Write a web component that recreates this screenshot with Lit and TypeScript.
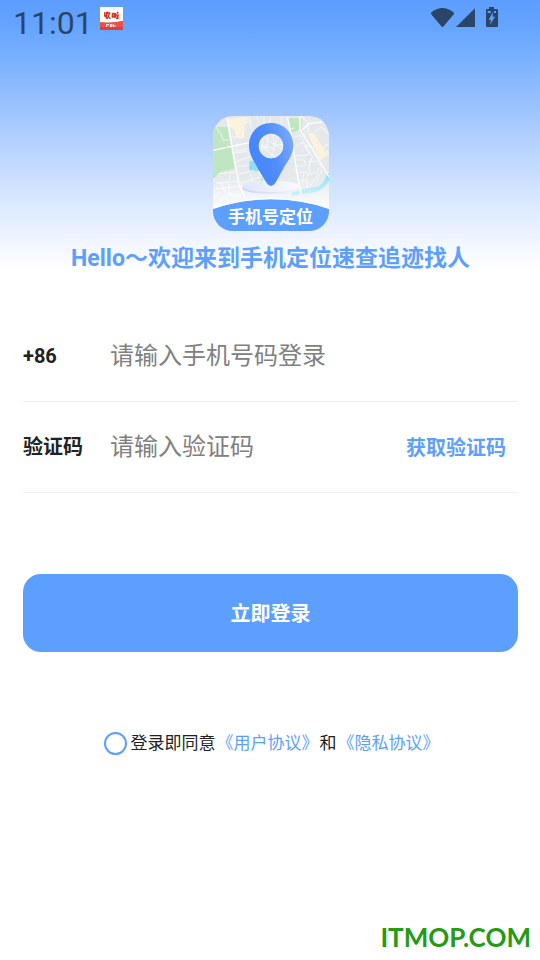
import { LitElement, html, css } from "lit";
import { customElement, state } from "lit/decorators.js";

@customElement("status-bar")
class StatusBar extends LitElement {
  static styles = css`
    :host {
      display: flex;
      justify-content: space-between;
      align-items: flex-start;
      height: 46px;
      padding: 0 41px 0 13px;
      box-sizing: border-box;
      color: #2b4567;
    }
    .group { display: flex; align-items: flex-start; }
    .time { font: 400 32px/46px Roboto, sans-serif; }
    .app { width: 23px; height: 23px; margin: 7px 0 0 7px; }
    .icons { width: 68px; height: 21px; margin-top: 7px; }
  `;

  render() {
    return html`
      <div class="group">
        <span class="time">11:01</span>
        <svg class="app" viewBox="0 0 69 69" aria-hidden="true">
          <rect width="69" height="69" fill="#fff" />
          <path d="M0 45 Q35 49 69 41 V69 H0Z" fill="#e9524b" />
          <path d="M0 60H69V69H0Z" fill="#d94238" />
          <path
            d="M14 16v12M19 14v21M13 28l6-2M24 14l-3 8M22 18h9M29 19l-8 17M23 24l8 12M37 19v13M37 19h5v11h-5M46 18v14M44 22h5M50 18h5M52 14l2 5M50 22l2 11M55 22l-2 11M48 34h8"
            fill="none" stroke="#d4351f" stroke-width="4"
          />
          <path d="M20 52v8M20 53h7M31 52v8M31 54h5M36 52v7M31 59h4M41 52v8M45 55v4" stroke="#fff" stroke-width="3" fill="none" />
        </svg>
      </div>
      <svg class="icons" viewBox="0 0 204 63" aria-hidden="true" fill="currentColor">
        <path d="M0 17Q34-11 69 17V21L36 60H33L0 21Z" />
        <path d="M132 4V60H75Z" />
        <path fill-rule="evenodd" d="M174 0h15v6h9q3 0 3 3v48q0 3-3 3h-30q-3 0-3-3V9q0-3 3-3h6ZM186 15l-13 23h7l-3 15 15-24h-7ZM170 12v6h9v-6ZM189 12v6h6v-6Z" />
      </svg>
    `;
  }
}

@customElement("app-logo")
class AppLogo extends LitElement {
  static styles = css`
    :host {
      display: grid;
      width: 116px;
      height: 115px;
      border-radius: 20px;
      overflow: hidden;
    }
    .map, .name { grid-area: 1 / 1; }
    .map { width: 116px; height: 115px; }
    .name {
      align-self: end;
      text-align: center;
      font: 700 17px/30px "Noto Sans CJK SC", sans-serif;
      color: #fff;
      z-index: 1;
    }
  `;

  render() {
    return html`
      <svg class="map" viewBox="39 33 348 345" aria-hidden="true">
        <defs>
          <linearGradient id="pin" x1="0" y1="0.6" x2="1" y2="0.2">
            <stop offset="0" stop-color="#4484fb" />
            <stop offset="0.5" stop-color="#508dfc" />
            <stop offset="1" stop-color="#7cabff" />
          </linearGradient>
          <linearGradient id="fade" x1="0" y1="0" x2="0" y2="1">
            <stop offset="0" stop-color="#fff" stop-opacity="0" />
            <stop offset="1" stop-color="#fff" />
          </linearGradient>
          <linearGradient id="disc" x1="0" y1="0" x2="1" y2="0">
            <stop offset="0" stop-color="#dfe6fb" />
            <stop offset="1" stop-color="#fafbff" />
          </linearGradient>
          <linearGradient id="rim" x1="0" y1="0" x2="1" y2="0">
            <stop offset="0" stop-color="#cbd5f4" />
            <stop offset="1" stop-color="#f0f4fd" />
          </linearGradient>
        </defs>
        <rect x="39" y="33" width="348" height="345" fill="#e5e9ec" />
        <path d="M39 66H83L104 192L58 202L53 215L39 224Z" fill="#c0e5c1" />
        <path d="M267 40H305V73L272 84Z M184 205L198 224V236H182Z" fill="#c0e5c1" />
        <path d="M82 42L143 36V53L130 58V97H108L103 74L86 66Z M324 88Q335 78 346 91L383 151L360 165Z M338 33H387V57Z" fill="#fcf3dc" />
        <path d="M150 168Q156 166 165 168L180 198H150Q144 184 150 168Z" fill="#92dcfb" />
        <path d="M387 204Q378 208 374 225Q364 248 327 249L275 262V273L336 263Q370 257 387 228Z" fill="#92e2fc" />
        <g fill="none" stroke="#fff" stroke-width="2">
          <path stroke-width="4" d="M80 33L94 112L117 239L133 272M39 136L94 124L149 113M300 33V75L338 133L387 216M262 36L273 84L290 199L304 270M306 75L327 56L387 49" />
          <path d="M49 66L68 97V105H88M39 224Q50 219 55 206L105 202M94 95L130 99L133 58L152 46M113 113L108 139L140 132M97 145L142 139M109 171L158 151M111 185L149 180M117 208L162 195M92 205L88 226M121 234L181 216M52 235L113 228M39 253L126 243M64 232L75 264L123 272M84 230L90 277M150 205L163 242M176 197L202 246M147 37L154 68M170 33L178 55M192 33V54M214 37L207 57M242 34L248 62M262 73L284 69M278 99L300 90L317 121L343 129M283 126L307 112L329 146L313 153L288 151M290 165H313L317 183H292M315 122L338 156L329 174V204M326 169H351L363 183M304 33L322 51M324 51V79L314 92M343 80L365 66L387 88M293 204L314 199L326 209L348 200M312 201L307 235M326 209Q314 226 323 249M292 226H313L327 232M357 187L348 219L331 241M366 191L350 233M39 279L60 264M64 282L87 267L125 277M369 126L387 117M379 137L387 150" />
          <path d="M180 90L248 134M192 87L186 126L229 157M232 92L215 154M204 86L201 122L181 124M219 84L222 121L247 118M169 132L211 126L228 136" />
        </g>
        <path d="M39 214H387V320H39Z" fill="url(#fade)" />
        <ellipse cx="211" cy="249" rx="84" ry="18" fill="url(#rim)" />
        <ellipse cx="212" cy="244" rx="84" ry="17" fill="url(#disc)" />
        <path fill-rule="evenodd" fill="url(#pin)" d="M213 54C175 54 147 83 147 121C147 151 163 169 174 191L200 234Q213 252 226 234L249 193C262 168 280 151 280 121C280 83 252 54 213 54ZM213 87A36 36 0 1 1 213 159A36 36 0 1 1 213 87Z" />
        <circle cx="213" cy="123" r="36" fill="none" stroke="#fff" stroke-width="2" />
        <path d="M39 312Q120 283 213 283Q306 283 387 312V378H39Z" fill="#5c9fff" />
        <path d="M39 310Q120 281 213 281Q306 281 387 310" fill="none" stroke="#fff" stroke-width="3" />
      </svg>
      <span class="name">手机号定位</span>
    `;
  }
}

@customElement("app-root")
class AppRoot extends LitElement {
  static styles = css`
    :host {
      display: flex;
      flex-direction: column;
      min-height: 100vh;
      box-sizing: border-box;
      background: linear-gradient(#5c9dff 0, #64a4ff 24px, #7ab0ff 60px, #acccff 130px, #d3e4ff 190px, #f0f5ff 240px, #fff 272px);
      background-color: #fff;
      background-repeat: no-repeat;
      font-family: Roboto, "Noto Sans CJK SC", sans-serif;
      color: #222;
    }
    .hero {
      display: flex;
      flex-direction: column;
      align-items: center;
      padding: 70px 0 0 1px;
    }
    .title {
      margin: 11px 0 0;
      font-size: 23px;
      line-height: 34px;
      font-weight: 700;
      color: #5c9fff;
    }
    .form {
      display: flex;
      flex-direction: column;
      margin: 35px 22px 0 23px;
    }
    .field {
      display: flex;
      align-items: center;
      height: 91px;
      box-sizing: border-box;
      border-bottom: 1px solid #eee;
    }
    .label { flex: 0 0 87px; font-size: 20px; line-height: 30px; font-weight: 700; }
    .input {
      flex: 1;
      min-width: 0;
      padding: 0;
      border: 0;
      outline: 0;
      background: transparent;
      font: 400 24px/36px Roboto, "Noto Sans CJK SC", sans-serif;
      color: #222;
    }
    .input::placeholder { color: #808080; opacity: 1; }
    .code {
      padding: 2px 12px 0;
      border: 0;
      background: transparent;
      font: 700 20px/30px Roboto, "Noto Sans CJK SC", sans-serif;
      color: #5c9fff;
    }
    .submit {
      height: 78px;
      margin-top: 81px;
      padding: 2px 0 0;
      border: 0;
      border-radius: 18px;
      background: #5c9fff;
      font: 700 20px/30px Roboto, "Noto Sans CJK SC", sans-serif;
      color: #fff;
    }
    .terms {
      display: flex;
      justify-content: center;
      align-items: center;
      margin-top: 77px;
      padding-left: 4px;
      font-size: 17px;
      line-height: 28px;
    }
    .check {
      appearance: none;
      width: 23px;
      height: 23px;
      margin: 0 4px 0 0;
      border: 2px solid #5c9fff;
      border-radius: 50%;
      background: #fff;
    }
    .check:checked { background: #5c9fff; box-shadow: inset 0 0 0 3px #fff; }
    .link { padding: 0 1px; color: #5c9fff; text-decoration: none; }
    .site {
      margin: auto 9px 5px auto;
      font: 700 26px/36px Lato, sans-serif;
      color: #259a14;
    }
  `;

  @state() private agreed = false;

  private toggle(e: Event) {
    this.agreed = (e.target as HTMLInputElement).checked;
  }

  render() {
    return html`
      <status-bar></status-bar>
      <header class="hero">
        <app-logo></app-logo>
        <h1 class="title">Hello～欢迎来到手机定位速查追迹找人</h1>
      </header>
      <form class="form" @submit=${(e: Event) => e.preventDefault()}>
        <div class="field">
          <label class="label" for="phone">+86</label>
          <input class="input" id="phone" type="tel" placeholder="请输入手机号码登录" />
        </div>
        <div class="field">
          <label class="label" for="code">验证码</label>
          <input class="input" id="code" type="text" inputmode="numeric" placeholder="请输入验证码" />
          <button class="code" type="button">获取验证码</button>
        </div>
        <button class="submit" type="submit">立即登录</button>
      </form>
      <div class="terms">
        <input class="check" id="agree" type="checkbox" .checked=${this.agreed} @change=${this.toggle} />
        <label for="agree">登录即同意</label>
        <a class="link" href="#terms">《用户协议》</a>
        <span>和</span>
        <a class="link" href="#privacy">《隐私协议》</a>
      </div>
      <footer class="site">ITMOP.COM</footer>
    `;
  }
}
